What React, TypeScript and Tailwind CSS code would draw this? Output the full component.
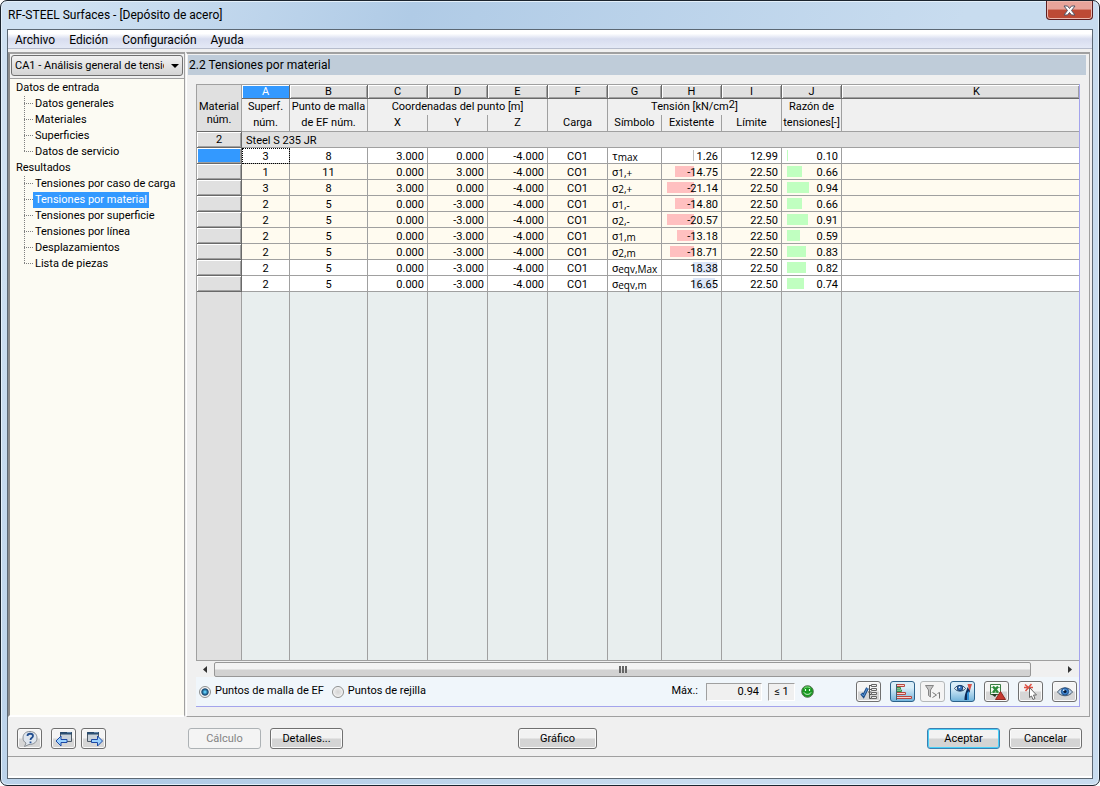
import { ReactNode, useState } from "react";
import { clsx } from "clsx";

const menus = ["Archivo", "Edición", "Configuración", "Ayuda"];

const tree = [
  { title: "Datos de entrada", items: ["Datos generales", "Materiales", "Superficies", "Datos de servicio"] },
  {
    title: "Resultados",
    items: [
      "Tensiones por caso de carga",
      "Tensiones por material",
      "Tensiones por superficie",
      "Tensiones por línea",
      "Desplazamientos",
      "Lista de piezas",
    ],
  },
];

const columns = ["A", "B", "C", "D", "E", "F", "G", "H", "I", "J", "K"];

type Row = {
  surface: number;
  point: number;
  x: string;
  y: string;
  z: string;
  symbol: string;
  sub: string;
  value: number;
  limit: string;
  ratio: number;
};

const rows: Row[] = [
  { surface: 3, point: 8, x: "3.000", y: "0.000", z: "-4.000", symbol: "τ", sub: "max", value: 1.26, limit: "12.99", ratio: 0.1 },
  { surface: 1, point: 11, x: "0.000", y: "3.000", z: "-4.000", symbol: "σ", sub: "1,+", value: -14.75, limit: "22.50", ratio: 0.66 },
  { surface: 3, point: 8, x: "3.000", y: "0.000", z: "-4.000", symbol: "σ", sub: "2,+", value: -21.14, limit: "22.50", ratio: 0.94 },
  { surface: 2, point: 5, x: "0.000", y: "-3.000", z: "-4.000", symbol: "σ", sub: "1,-", value: -14.8, limit: "22.50", ratio: 0.66 },
  { surface: 2, point: 5, x: "0.000", y: "-3.000", z: "-4.000", symbol: "σ", sub: "2,-", value: -20.57, limit: "22.50", ratio: 0.91 },
  { surface: 2, point: 5, x: "0.000", y: "-3.000", z: "-4.000", symbol: "σ", sub: "1,m", value: -13.18, limit: "22.50", ratio: 0.59 },
  { surface: 2, point: 5, x: "0.000", y: "-3.000", z: "-4.000", symbol: "σ", sub: "2,m", value: -18.71, limit: "22.50", ratio: 0.83 },
  { surface: 2, point: 5, x: "0.000", y: "-3.000", z: "-4.000", symbol: "σ", sub: "eqv,Max", value: 18.38, limit: "22.50", ratio: 0.82 },
  { surface: 2, point: 5, x: "0.000", y: "-3.000", z: "-4.000", symbol: "σ", sub: "eqv,m", value: 16.65, limit: "22.50", ratio: 0.74 },
];

function PushButton({ children, disabled, primary, className }: { children: ReactNode; disabled?: boolean; primary?: boolean; className?: string }) {
  return (
    <button
      type="button"
      disabled={disabled}
      className={clsx(
        "h-[21px] rounded-[3px] border leading-none",
        disabled && "border-[#adb2b5] bg-[#f4f4f4] text-[#838383]",
        primary && "border-[#3c7fb1] bg-linear-to-b from-[#f2f2f2] from-45% to-[#d4d4d4] to-55% shadow-[inset_0_0_0_1px_#48d0f8]",
        !disabled && !primary && "border-[#707070] bg-linear-to-b from-[#f2f2f2] from-45% to-[#d4d4d4] to-55% shadow-[inset_0_0_0_1px_#fafafa]",
        className ?? "w-[73px]",
      )}
    >
      {children}
    </button>
  );
}

function IconButton({ label, children, pressed, disabled }: { label: string; children: ReactNode; pressed?: boolean; disabled?: boolean }) {
  return (
    <button
      type="button"
      aria-label={label}
      disabled={disabled}
      className={clsx(
        "flex h-[21px] w-[25px] shrink-0 items-center justify-center rounded-[3px] border",
        pressed && "border-[#2c628b] bg-linear-to-b from-[#d9edf8] from-30% to-[#73b5dc]",
        disabled && "border-[#b4b8ba] bg-[#f4f4f4]",
        !pressed && !disabled && "border-[#707070] bg-linear-to-b from-[#f4f4f4] from-45% to-[#d6d6d6] to-55% shadow-[inset_0_0_0_1px_#fafafa]",
      )}
    >
      <svg width="20" height="18" viewBox="0 0 20 18" fill="none">
        {children}
      </svg>
    </button>
  );
}

function WindowShape({ x }: { x: number }) {
  return (
    <>
      <path d={`M${x} 2.500h11v9h-11z`} fill="#c9d2da" stroke="#4e5a66" />
      <path d={`M${x} 2.500h11v1.500h-11z`} fill="#33587f" stroke="#27496b" />
      <path d={`M${x + 7} 2.500h1M${x + 9} 2.500h1`} stroke="#9fc4e8" />
    </>
  );
}

function Branch({ last }: { last: boolean }) {
  return (
    <svg width="9" height="16" viewBox="0 0 9 16" className="shrink-0" stroke="#808080" strokeDasharray="1 1">
      <path d={last ? "M.5 0V8" : "M.5 0V16"} />
      <path d="M0 7.500H9" />
    </svg>
  );
}

function Sidebar() {
  const [active, setActive] = useState("Tensiones por material");

  return (
    <nav className="flex w-[177px] shrink-0 flex-col border-y-2 border-r border-l-2 border-y-[#a0a0a0] border-r-[#a0a0a0] border-l-[#8c8c8c] border-b-white bg-[#fcfbf3]">
      <div className="grid border-b border-[#a0a0a0] bg-[#f0f0f0] px-px pt-px pb-0.5">
        <select
          aria-label="Caso"
          className="col-start-1 row-start-1 h-[21px] w-full appearance-none rounded-[3px] border border-[#707070] bg-linear-to-b from-[#f2f2f2] to-[#d4d4d4] pt-0.5 pr-[18px] pl-[3px] text-clip"
        >
          <option>CA1 - Análisis general de tensiones</option>
        </select>
        <svg width="8" height="4" viewBox="0 0 8 4" className="pointer-events-none col-start-1 row-start-1 mr-1 self-center justify-self-end">
          <path d="M0 0h8L4 4z" fill="#000" />
        </svg>
      </div>
      <div className="flex-1 pt-px pl-1.5">
        {tree.map((group) => (
          <div key={group.title} className="leading-4">
            <p>{group.title}</p>
            <ul className="pl-2">
              {group.items.map((item, i) => (
                <li key={item} className="flex h-4 items-stretch">
                  <Branch last={i === group.items.length - 1} />
                  <button
                    type="button"
                    onClick={() => setActive(item)}
                    className={clsx("px-0.5 whitespace-nowrap", item === active && "bg-[#3399ff] text-white")}
                  >
                    {item}
                  </button>
                </li>
              ))}
            </ul>
          </div>
        ))}
      </div>
    </nav>
  );
}

const head = "border-[#a0a0a0] bg-[#f0f0f0] px-0 pt-0 pb-0.5 font-normal leading-[13px]";
const rowHead = "border-r border-b border-r-[#696969] border-b-[#696969] p-0 font-normal shadow-[inset_1px_1px_0_#fff,inset_-1px_-1px_0_#a0a0a0]";

function StressBar({ value }: { value: number }) {
  const size = Math.max(1, Math.round(Math.abs(value) * 1.3));
  return (
    <div className="grid">
      <span
        className={clsx("col-start-1 row-start-1 h-[11px]", value < 0 ? "bg-[#ffc0c0]" : value < 5 ? "bg-[#c0c0c0]" : "bg-[#dce6f8]")}
        style={value < 0 ? { width: size, marginLeft: 32 - size } : { width: value < 5 ? 1 : size, marginLeft: 31 }}
      />
      <span className="col-start-1 row-start-1 pr-[3px] text-right">{value.toFixed(2)}</span>
    </div>
  );
}

function RatioBar({ value }: { value: number }) {
  return (
    <div className="grid">
      <span className="col-start-1 row-start-1 ml-[5px] h-[11px] bg-[#c0ffc0]" style={{ width: Math.max(1, Math.round(value * 25 - 2)) }} />
      <span className="col-start-1 row-start-1 pr-[3px] text-right">{value.toFixed(2)}</span>
    </div>
  );
}

function ResultsTable() {
  return (
    <table className="h-full w-full table-fixed border-separate border-spacing-0 border-t border-l border-[#a0a0a0] text-center leading-[13px]">
      <colgroup>
        <col className="w-[45px]" />
        <col className="w-12" />
        <col className="w-[78px]" />
        <col className="w-[60px]" />
        <col className="w-[60px]" />
        <col className="w-[60px]" />
        <col className="w-[60px]" />
        <col className="w-[54px]" />
        <col className="w-[60px]" />
        <col className="w-[60px]" />
        <col className="w-[60px]" />
        <col />
      </colgroup>
      <thead>
        <tr className="h-[14px]">
          <th rowSpan={3} className="border-r border-b border-[#a0a0a0] border-b-[#696969] bg-[#e0e0e0] px-0 pt-2.5 pb-0 font-normal">
            Material
            <br />
            núm.
          </th>
          {columns.map((c, i) => (
            <th
              key={c}
              className={clsx(
                "h-[14px] border-b border-[#696969] py-0 pr-0 font-normal",
                c === "K" ? "pl-8" : "border-r pl-0",
                i === 0 ? "bg-[#3399ff] text-white shadow-[inset_1px_1px_0_#fff]" : "bg-[#e0e0e0] shadow-[inset_1px_1px_0_#fff,inset_-1px_-1px_0_#a0a0a0]",
              )}
            >
              {c}
            </th>
          ))}
        </tr>
        <tr className="h-4">
          <th className={clsx(head, "border-r")}>Superf.</th>
          <th className={clsx(head, "border-r whitespace-nowrap")}>Punto de malla</th>
          <th colSpan={3} className={clsx(head, "border-r")}>Coordenadas del punto [m]</th>
          <th className={clsx(head, "border-r")} />
          <th colSpan={3} className={clsx(head, "border-r")}>
            Tensión [kN/cm<span className="relative -top-0.5">2</span>]
          </th>
          <th className={clsx(head, "border-r")}>Razón de</th>
          <th className={head} />
        </tr>
        <tr className="h-[17px]">
          {["núm.", "de EF núm.", "X", "Y", "Z", "Carga", "Símbolo", "Existente", "Límite", "tensiones[-]"].map((t) => (
            <th key={t} className={clsx(head, "border-r border-b whitespace-nowrap")}>
              {t}
            </th>
          ))}
          <th className={clsx(head, "border-b")} />
        </tr>
      </thead>
      <tbody>
        <tr className="h-4">
          <th className={clsx(rowHead, "bg-[#e0e0e0]")}>2</th>
          <td colSpan={11} className="border-b border-[#a0a0a0] bg-[#e0e0e0] py-0 pt-0.5 pr-0 pl-1 text-left">
            Steel S 235 JR
          </td>
        </tr>
        {rows.map((row, i) => {
          const cell = clsx("border-r border-b border-[#a0a0a0] pt-0.5 pb-0 pl-0", i > 0 && i < 7 ? "bg-[#fffbf0]" : "bg-white");
          return (
            <tr key={i} className="h-4">
              <th className={clsx(rowHead, i === 0 ? "bg-[#3399ff]" : "bg-[#e0e0e0]")} />
              <td className={clsx(cell, "pr-0", i === 0 && "outline-1 -outline-offset-1 outline-black outline-dotted")}>{row.surface}</td>
              <td className={clsx(cell, "pr-0")}>{row.point}</td>
              <td className={clsx(cell, "pr-[3px] text-right")}>{row.x}</td>
              <td className={clsx(cell, "pr-[3px] text-right")}>{row.y}</td>
              <td className={clsx(cell, "pr-[3px] text-right")}>{row.z}</td>
              <td className={clsx(cell, "pr-0")}>CO1</td>
              <td className={clsx("border-r border-b border-[#a0a0a0] pt-0.5 pr-0 pb-0 pl-1 text-left whitespace-nowrap", i > 0 && i < 7 ? "bg-[#fffbf0]" : "bg-white")}>
                {row.symbol}
                <span className="relative top-px font-['Open_Sans',sans-serif] text-[10px]">{row.sub}</span>
              </td>
              <td className={clsx(cell, "pr-0")}>
                <StressBar value={row.value} />
              </td>
              <td className={clsx(cell, "pr-[3px] text-right")}>{row.limit}</td>
              <td className={clsx(cell, "pr-0")}>
                <RatioBar value={row.ratio} />
              </td>
              <td className={clsx(cell, "border-r-0 pr-0")} />
            </tr>
          );
        })}
        <tr>
          <td className="border-r border-[#a0a0a0] bg-[#e0e0e0]" />
          {columns.map((c) => (
            <td key={c} className={clsx("border-[#a0a0a0] bg-[#e8eeee]", c !== "K" && "border-r")} />
          ))}
        </tr>
      </tbody>
    </table>
  );
}

function ScrollBar() {
  return (
    <div className="flex h-[17px] shrink-0 items-center border-t border-[#a0a0a0] bg-[#f0f0f0]">
      <button type="button" aria-label="Desplazar a la izquierda" className="flex w-[18px] justify-center">
        <svg width="4" height="7" viewBox="0 0 4 7">
          <path d="M4 0v7L0 3.500z" fill="#333" />
        </svg>
      </button>
      <div className="flex h-[15px] flex-1 items-center justify-center gap-px rounded-xs border border-[#979797] bg-linear-to-b from-[#f3f3f3] from-45% to-[#d2d2d2] to-55%">
        <span className="h-[7px] w-0.5 bg-[#666]" />
        <span className="h-[7px] w-0.5 bg-[#666]" />
        <span className="h-[7px] w-0.5 bg-[#666]" />
      </div>
      <button type="button" aria-label="Desplazar a la derecha" className="ml-[30px] flex w-[18px] justify-center">
        <svg width="4" height="7" viewBox="0 0 4 7">
          <path d="M0 0v7l4-3.500z" fill="#333" />
        </svg>
      </button>
    </div>
  );
}

const radio =
  "size-3 appearance-none rounded-full border border-[#8e8f8f] bg-radial from-[#d4d4d4] to-[#f8f8f8] shadow-[inset_0_0_0_1px_#f4f4f4] checked:from-[#5cc8f4] checked:from-10% checked:via-[#12446e] checked:via-45% checked:to-[#f0f0f0] checked:to-60%";

function ResultsToolbar() {
  return (
    <div className="flex h-[30px] shrink-0 items-center border-b border-[#a4a4ec] bg-[#f0f6fb] pr-0.5 pl-[3px]">
      <label className="flex items-center gap-1">
        <input type="radio" name="points" defaultChecked className={radio} />
        Puntos de malla de EF
      </label>
      <label className="ml-2 flex items-center gap-1">
        <input type="radio" name="points" className={radio} />
        Puntos de rejilla
      </label>
      <label htmlFor="max" className="ml-auto">
        Máx.:
      </label>
      <input
        id="max"
        readOnly
        value="0.94"
        className="ml-2 h-[18px] w-14 border border-t-[#a0a0a0] border-r-white border-b-white border-l-[#a0a0a0] bg-[#f0f0f0] pr-0.5 text-right"
      />
      <span className="ml-1.5 h-[18px] w-[27px] border border-t-[#a0a0a0] border-r-white border-b-white border-l-[#a0a0a0] bg-[#f0f0f0] text-center leading-4">≤ 1</span>
      <svg width="13" height="13" viewBox="0 0 13 13" className="ml-1.5" fill="none">
        <circle cx="6.500" cy="6.500" r="5.800" fill="#189a20" stroke="#55704f" />
        <path d="M3 3.500C4.500 1.500 8 1.500 9.500 3.200" stroke="#8ae88a" />
        <path d="M4.500 4v2M8.500 4v2" stroke="#e8ffe8" strokeWidth="1.200" />
        <path d="M3 7.500C4.500 10 8.500 10 10 7.500" stroke="#e8ffe8" />
      </svg>
      <div className="ml-[42px] flex items-center gap-[9px]">
        <IconButton label="Seleccionar">
          <path d="M10.500 2v13.500M9 9h3.500M10.500 2.500h2M10.500 6.500h2M10.500 11.500h2M10.500 15.500h2" stroke="#555" />
          <path d="M12.500 1.500h5v2h-5zM12.500 5.500h5v2h-5zM12.500 9.500h5v2h-5zM12.500 13.500h5v2h-5z" fill="#eee" stroke="#666" />
          <path d="M2.500 10.500L4.500 13L8.500 5" stroke="#1e4d88" strokeWidth="3" />
          <path d="M2.500 10.500L4.500 13L8.500 5" stroke="#5d9bdd" />
        </IconButton>
        <div className="flex gap-[5px]">
          <IconButton label="Barras" pressed>
            <path d="M3.500 1.500h8v2h-8zM3.500 9.500h9v2h-9zM3.500 13.500h15v2h-15z" fill="#ffd0ca" stroke="#b54842" />
            <path d="M3.500 4.500h4v1.500h-4zM3.500 7h5v1.500h-5z" fill="#d7f4c4" stroke="#35904c" />
            <path d="M3.500 1v16" stroke="#3f6074" />
          </IconButton>
          <IconButton label="Filtro" disabled>
            <path d="M2.500 2.500h8L7.500 7v7l-2-1.500V7z" fill="#c4c4c4" stroke="#858585" />
            <path d="M9.500 9.500l4 2.500-4 2.500M14.500 10.500l2-1v6" stroke="#777" />
          </IconButton>
          <IconButton label="Escala de colores" pressed>
            <path d="M14.500 1h4.500l-2.500 8z" fill="#d9534a" />
            <path d="M11.500 17c0-6 2-9 3-13l2.500 4c-2 3-1.500 6-1.500 9z" fill="#0b2c5b" />
            <path d="M14 10l2-2v9h-2z" fill="#2e8fd6" />
            <path d="M1.500 5.500C4 1.500 10 1.500 12.500 5.500C10 9 4 9 1.500 5.500Z" fill="#dfe9f2" stroke="#27496b" />
            <circle cx="7" cy="5" r="2.700" fill="#3470b8" stroke="#173e70" />
            <circle cx="6.500" cy="4.300" r=".8" fill="#fff" />
          </IconButton>
        </div>
        <IconButton label="Exportar a Excel">
          <path d="M3.500 1.500h10v10h-10z" fill="#f4faf2" stroke="#3b7d42" />
          <path d="M4 4.500h9M4 9.500h9" stroke="#8fc295" />
          <path d="M6 3.500l5 6M11 3.500l-5 6" stroke="#2c8a3a" strokeWidth="2.200" />
          <path d="M4 11h6l-2 3z" fill="#263b27" />
          <path d="M13.500 8.500l5 8h-10z" fill="#c8382e" stroke="#8d2720" />
        </IconButton>
        <IconButton label="Elegir en gráfico">
          <path d="M4 1.500l7 6M10.500 1L4.500 8M3 4.500h9" stroke="#dd5144" strokeWidth="1.500" />
          <path d="M8.500 4.500v10l2-1.500 1.500 3.500 2-1-1.500-3.500h3z" fill="#fff" stroke="#666" />
        </IconButton>
        <IconButton label="Ver gráfico">
          <path d="M2.500 9C6 3.500 14 3.500 17.500 9C14 14 6 14 2.500 9Z" fill="#b9d2ea" stroke="#4d5c6e" />
          <circle cx="10" cy="8.500" r="3.600" fill="#3f83cc" stroke="#1c4f8c" />
          <circle cx="10" cy="8.500" r="1.600" fill="#071a38" />
          <circle cx="8.700" cy="7.300" r=".8" fill="#fff" />
        </IconButton>
      </div>
    </div>
  );
}

export default function App() {
  return (
    <div className="h-screen bg-white font-['Roboto','Liberation_Sans',sans-serif] text-[11px] text-black">
      <div className="flex h-full flex-col rounded-[7px] border border-[#1b242e] bg-linear-110 from-[#cfe1f2] from-5% via-[#b0cbe6] via-30% to-[#c8dcef] to-70% px-1.5 pb-1.5 shadow-[inset_0_0_0_1px_#e4f0fa]">
        <header className="flex h-7 shrink-0 items-start justify-between pl-px">
          <h1 className="text-xs leading-7">RF-STEEL Surfaces - [Depósito de acero]</h1>
          <button
            type="button"
            aria-label="Cerrar"
            className="flex h-[19px] w-[47px] items-center justify-center rounded-b-[4px] border border-t-0 border-[#5c1e20] bg-linear-to-b from-[#e8a49a] from-45% to-[#bd4a35] to-50% shadow-[inset_0_0_0_1px_#ecb8ae]"
          >
            <svg width="13" height="11" viewBox="0 0 13 11">
              <path d="M1 1h3.500l2 2.500 2-2.500H12L8.500 5.500 12 10H8.500l-2-2.500-2 2.500H1l3.500-4.500z" fill="#fff" stroke="#535666" />
            </svg>
          </button>
        </header>

        <div className="flex min-h-0 flex-1 flex-col border border-[#5c6874] bg-[#f0f0f0]">
          <div className="flex h-[19px] shrink-0 gap-3.5 border-b border-[#b6bccc] bg-linear-to-b from-white from-20% via-[#d8ddef] via-50% to-[#e4e9f6] px-[7px] text-xs leading-5">
            {menus.map((m) => (
              <button key={m} type="button">
                {m}
              </button>
            ))}
          </div>

          <div className="mt-[3px] flex min-h-0 flex-1 gap-px">
            <Sidebar />
            <main className="mr-0.5 flex min-w-0 flex-1 flex-col border-t-2 border-r border-b border-l border-t-[#a0a0a0] border-r-[#a0a0a0] border-b-[#a0a0a0] border-l-white px-[3px] pt-px pl-px">
              <h2 className="h-5 shrink-0 bg-[#bfccd9] px-px text-xs leading-5">2.2 Tensiones por material</h2>
              <div className="mt-[9px] mr-1.5 mb-[9px] ml-2 flex min-h-0 flex-1 flex-col border-r border-[#a4a4ec]">
                <div className="min-h-0 flex-1">
                  <ResultsTable />
                </div>
                <ScrollBar />
                <ResultsToolbar />
              </div>
            </main>
          </div>

          <footer className="shrink-0">
            <div className="flex h-10 items-center border-b border-[#a0a0a0] pt-1 pr-2.5 pl-[9px]">
              <div className="flex w-[171px] gap-[5px]">
                <span className="mr-1 flex">
                  <IconButton label="Ayuda">
                    <path d="M10 1.500C5 1.500 3 4.500 3 8c0 2 1 4 3 5l-1.500 3.500L9 14.500c5 0 8-2.500 8-6.500s-3-6.500-7-6.500z" fill="#dfe6ee" stroke="#8a8f95" />
                    <path d="M7.500 6c0-3 5.500-3 5.500 0 0 2-2.500 1.500-2.500 4M10.500 11.500v1.800" stroke="#234f91" strokeWidth="1.800" />
                  </IconButton>
                </span>
                <IconButton label="Tabla anterior">
                  <WindowShape x={6.500} />
                  <path d="M2 11L7 6v3.500h6v3H7V16z" fill="#9bd2ff" stroke="#1d49a5" />
                </IconButton>
                <IconButton label="Tabla siguiente">
                  <WindowShape x={3.500} />
                  <path d="M18.500 11L13.500 6v3.500h-6v3h6V16z" fill="#9bd2ff" stroke="#1d49a5" />
                </IconButton>
              </div>
              <PushButton disabled>Cálculo</PushButton>
              <PushButton className="ml-[9px] w-[73px]">Detalles...</PushButton>
              <PushButton className="ml-[175px] w-[79px]">Gráfico</PushButton>
              <div className="ml-auto flex gap-[9px]">
                <PushButton primary>Aceptar</PushButton>
                <PushButton>Cancelar</PushButton>
              </div>
            </div>
            <div className="h-[21px] border-b-2 border-white" />
          </footer>
        </div>
      </div>
    </div>
  );
}
